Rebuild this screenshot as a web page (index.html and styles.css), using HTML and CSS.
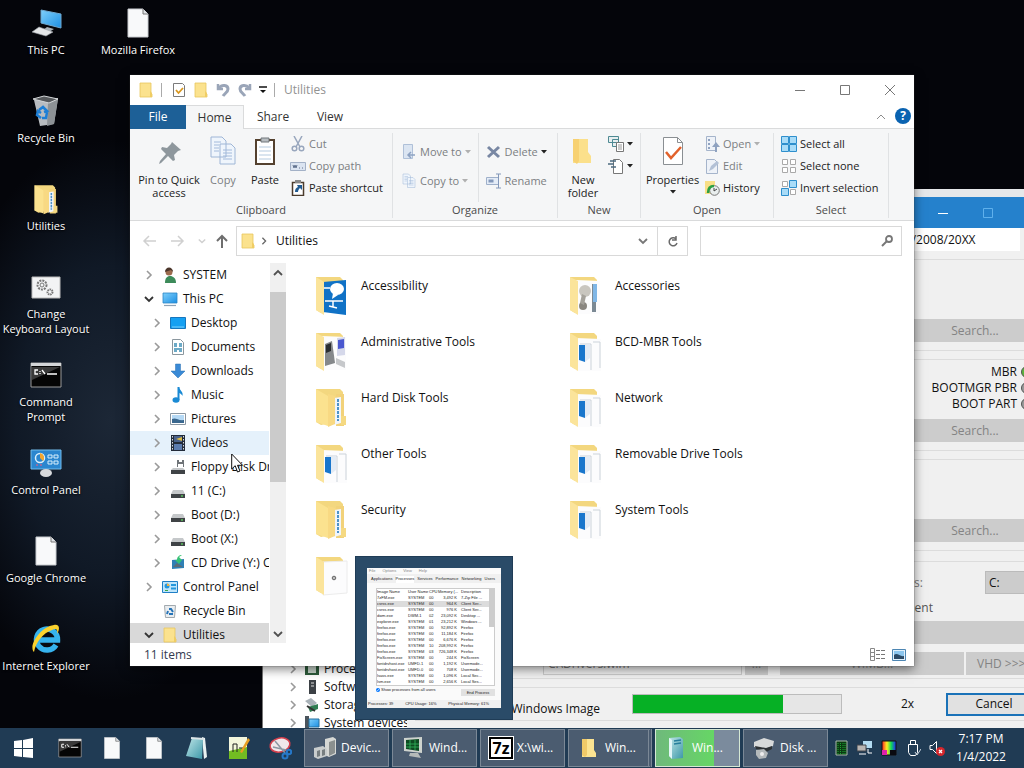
FILE: index.html
```
<!DOCTYPE html>
<html lang="en">
<head>
    <meta charset="UTF-8">
    <meta name="viewport" content="width=device-width, initial-scale=1.0">
    <title>Utilities</title>
    <link rel="stylesheet" href="styles.css">
</head>
<body>

<!-- shared icons -->
<svg class="sprite" width="0" height="0">
    <defs>
        <linearGradient id="gBlue" x1="0" y1="0" x2="1" y2="1"><stop offset="0" stop-color="#7fd0fb"/><stop offset="1" stop-color="#1c8fe3"/></linearGradient>
        <linearGradient id="gTeal" x1="0" y1="0" x2="1" y2="1"><stop offset="0" stop-color="#bfe6e8"/><stop offset="1" stop-color="#3c97a8"/></linearGradient>
        <linearGradient id="gRain"><stop offset="0" stop-color="#f22"/><stop offset=".35" stop-color="#fe2"/><stop offset=".65" stop-color="#1d5"/><stop offset="1" stop-color="#22f"/></linearGradient>
    </defs>
    <symbol id="folder" viewBox="0 0 16 16"><path d="M2 1h11v10l1 1v3H2z" fill="#fbe28e" stroke="#e8c65e" stroke-width=".8"/><path d="M12 9l2 2v4h-2z" fill="#f0cd63"/></symbol>
    <symbol id="page" viewBox="0 0 32 32"><path d="M6 2h15l5 5v23H6z" fill="#f8f9fa" stroke="#c9ccd0"/><path d="M21 2v5h5" fill="#dfe2e5" stroke="#777"/></symbol>
    <symbol id="chev" viewBox="0 0 10 10"><path d="M3 1l4 4-4 4" fill="none" stroke="currentColor" stroke-width="1.6"/></symbol>
    <symbol id="chevd" viewBox="0 0 10 10"><path d="M1 3l4 4 4-4" fill="none" stroke="currentColor" stroke-width="1.8"/></symbol>
    <symbol id="drop" viewBox="0 0 6 4"><path d="M0 0h6L3 3.5z" fill="currentColor"/></symbol>
    <symbol id="pc" viewBox="0 0 16 16"><path d="M1 2h14v10H1z" fill="url(#gBlue)" stroke="#2b86c5" stroke-width=".8"/><path d="M2 14.5h12" stroke="#8fa3b5" stroke-width="1.2"/></symbol>
    <symbol id="drive" viewBox="0 0 16 16"><path d="M3 7h10l2 4H1z" fill="#c5c8ca"/><path d="M1 11h14v4H1z" fill="#3f4346"/><path d="M11 13h2" stroke="#6f6"/></symbol>
    <symbol id="cpanel" viewBox="0 0 16 16"><path d="M.5 2.500h15v11H.5z" fill="#bfe5fb" stroke="#1f7fc6"/><circle cx="5" cy="7" r="2.500" fill="#2497dd"/><path d="M5 7V4.500A2.500 2.500 0 0 1 7.500 7z" fill="#f6b13c"/><path d="M9 5h5v2H9zM9 8.500h5v2H9z" fill="#2497dd"/><path d="M3 11.500h3" stroke="#3aa648"/></symbol>
    <symbol id="cmd" viewBox="0 0 32 32"><path d="M1 4h30v24H1z" fill="#050505" stroke="#9a9a9a"/><path d="M1 4h30v3H1z" fill="#d4d6d8"/><path d="M2 8h28L2 21z" fill="#3a3a3a"/><path d="M8 11H5v4h3M10 12v1M10 14v1M12 11l3 4M17 15h10" stroke="#fff" stroke-width="1.300" fill="none"/></symbol>
    <!-- large open folders -->
    <symbol id="fold-back" viewBox="0 0 36 42"><path d="M3 3h24l3 3v28l-22 5L3 36z" fill="#f3d77f"/></symbol>
    <symbol id="fold-blue" viewBox="0 0 36 42"><use href="#fold-back"/><path d="M9 8l25 1v32H9z" fill="#fcfcfd"/><path d="M13 14h11v26M26 12h7v26" fill="none" stroke="#ccd3da"/><path d="M12 15h6v17l-6-2z" fill="#1976cc"/><path d="M18 15l5-1v14l-5 4z" fill="#e3ebf5"/><path d="M3 3l8 5v33l-8-5z" fill="#fbe49b"/></symbol>
    <symbol id="fold-tools" viewBox="0 0 36 42"><use href="#fold-back"/><path d="M23 8h8v32h-8z" fill="#f2d27a"/><path d="M21 12l7-1v26l-7 2z" fill="#f1f5fa"/><path d="M25 13v22" stroke="#4f93c9" stroke-width="2" stroke-dasharray="3 1"/><path d="M3 3l12 7v30L3 36z" fill="#fbe28f"/><path d="M15 8l7 2v28l-7 3z" fill="#f8d983"/><path d="M28 30h5v9h-5z" fill="#f5d982"/></symbol>
    <symbol id="pages" viewBox="0 0 32 32"><path d="M4 2h11l4 4v16H4zM13 9h11l4 4v16H13z" fill="#eff5fc" stroke="#9fb6d6"/><path d="M7 7h7M7 10h5M7 13h5M7 16h5M16 15h9M16 18h9M16 21h9M16 24h9" stroke="#a3badb"/></symbol>
</svg>

<div class="desktop">

    <nav class="shortcuts">
        <ul class="shortcut-col">
            <li><svg viewBox="0 0 32 32"><path d="M11 3l20 4v14l-20-5z" fill="url(#gBlue)" stroke="#6fa8cf"/><path d="M17 20l7 2-5 3-6-2z" fill="#aab3ba"/><path d="M9 20l14 5-7 4-14-4z" fill="#e4e6e8" stroke="#9aa0a5" stroke-width=".6"/></svg><span>This PC</span></li>
            <li><svg viewBox="0 0 32 32"><path d="M4 5l24-2-4 26-14 2z" fill="#b8bcc0"/><path d="M18 8l10-4-4 25-7 2z" fill="#8d9296"/><path d="M3 4l11-3 14 3-9 4z" fill="#56595c" stroke="#d5d8da"/><path d="M9 15l4-3 4 4-3 1M17 17l-1 6h-4M11 23l-4-3 1-4 3 2" fill="none" stroke="#1d7fd6" stroke-width="2.500"/></svg><span>Recycle Bin</span></li>
            <li><svg viewBox="0 0 36 42"><use href="#fold-tools"/></svg><span>Utilities</span></li>
            <li><svg viewBox="0 0 32 32"><path d="M2 6h28v21H2z" fill="#f2f3f4" stroke="#bbb"/><circle cx="12" cy="14" r="4.500" fill="none" stroke="#777" stroke-width="2" stroke-dasharray="2 1"/><circle cx="12" cy="14" r="2" fill="none" stroke="#777"/><circle cx="20" cy="21" r="2.500" fill="none" stroke="#777" stroke-width="2" stroke-dasharray="1.500 .7"/></svg><span>Change<br>Keyboard Layout</span></li>
            <li><svg><use href="#cmd"/></svg><span>Command<br>Prompt</span></li>
            <li><svg viewBox="0 0 32 32"><path d="M1 3h30v19H1z" fill="#2b86cf" stroke="#73bcec"/><circle cx="10" cy="11" r="4.500" fill="none" stroke="#d9effc" stroke-width="1.500"/><path d="M10 11V6a5 5 0 0 1 3 8z" fill="#f3a62f"/><path d="M18 8h4v3h-4zM24 8h4v3h-4zM18 14h4v3h-4zM24 14h4v3h-4z" fill="none" stroke="#d9effc"/><ellipse cx="16" cy="26" rx="6" ry="4" fill="#d8dadd"/><path d="M6 18h6" stroke="#f57" stroke-dasharray="2 2"/></svg><span>Control Panel</span></li>
            <li><svg><use href="#page"/></svg><span>Google Chrome</span></li>
            <li><svg viewBox="0 0 32 32"><path d="M26 22a10.500 10.500 0 1 1 1.500-5H9" fill="none" stroke="#36b3ee" stroke-width="5.500"/><path d="M4 29C-2 23 10 4 24 2c6-1 6 4 3 9 1-5-1-6-5-4C13 10 6 19 4 29z" fill="#fbd22e"/></svg><span>Internet Explorer</span></li>
        </ul>
        <ul class="shortcut-col">
            <li><svg><use href="#page"/></svg><span>Mozilla Firefox</span></li>
        </ul>
    </nav>

    <!-- device manager -->
    <section class="devices">
        <ul>
            <li><svg class="chev"><use href="#chev"/></svg><svg class="ico" viewBox="0 0 16 16"><path d="M1 3h14v11H1z" fill="#2d5c3b"/><path d="M4 5h8v7H4z" fill="#c9d6cc"/></svg>Processors</li>
            <li><svg class="chev"><use href="#chev"/></svg><svg class="ico" viewBox="0 0 16 16"><path d="M5 1h7v14H5z" fill="#3b4045"/><path d="M7 4h3M7 7h3" stroke="#ddd"/></svg>Software devices</li>
            <li><svg class="chev"><use href="#chev"/></svg><svg class="ico" viewBox="0 0 16 16"><path d="M1 4l6-3 6 5-5 4z" fill="#a9b2b8"/><path d="M4 10l10-3v5l-8 3z" fill="#2f7d52"/><path d="M3 9l8 5" stroke="#333" stroke-width="2"/></svg>Storage controllers</li>
            <li><svg class="chev"><use href="#chev"/></svg><svg class="ico" viewBox="0 0 16 16"><path d="M1 1h4v13H1z" fill="#4b545c"/><path d="M5 4h10v8H5z" fill="url(#gBlue)" stroke="#26709e"/></svg>System devices</li>
        </ul>
    </section>

    <!-- windows setup -->
    <section class="setup">
        <header class="setup-title">
            <button type="button" aria-label="Minimize"><svg viewBox="0 0 10 10"><path d="M0 5.500h10" stroke="#fff"/></svg></button>
            <button type="button" aria-label="Maximize" disabled><svg viewBox="0 0 10 10"><path d="M.5.5h9v9h-9z" fill="none" stroke="#5fb0ec"/></svg></button>
            <button type="button" aria-label="Close"><svg viewBox="0 0 10 10"><path d="M0 0l10 10M10 0L0 10" stroke="#fff"/></svg></button>
        </header>
        <div class="setup-body">
            <select class="setup-os" aria-label="Windows version"><option>Windows Vista/7/8/10/2008/20XX</option></select>
            <div class="box"><button type="button" class="flat search" disabled>Search...</button></div>
            <div class="box">
                <ul class="boot-state">
                    <li>MBR<i class="led green"></i></li>
                    <li>BOOTMGR PBR<i class="led"></i></li>
                    <li>BOOT PART<i class="led"></i></li>
                </ul>
                <button type="button" class="flat search" disabled>Search...</button>
            </div>
            <div class="box"><button type="button" class="flat search" disabled>Search...</button></div>
            <div class="box options">
                <div class="opt-row"><label for="driveLetter">Preassigned drives:</label><select id="driveLetter"><option>C:</option></select></div>
                <div class="opt-note">Unattended deployment</div>
                <button type="button" class="flat wide" aria-label="Options" disabled></button>
                <div class="opt-buttons">
                    <input type="text" value="C:\Drivers.wim" aria-label="Driver file" disabled>
                    <button type="button" class="flat dots" disabled>...</button>
                    <button type="button" class="flat wimb" disabled>WIMB...</button>
                    <button type="button" class="flat vhd" disabled>VHD &gt;&gt;&gt;</button>
                </div>
            </div>
            <div class="box status">
                <span class="status-text">Applying Windows Image</span>
                <div class="progress"><div class="progress-fill" style="width: 72%"></div></div>
                <span class="speed">2x</span>
                <button type="button" class="cancel">Cancel</button>
            </div>
        </div>
    </section>

    <!-- file explorer -->
    <main class="explorer">
        <header class="titlebar">
            <svg class="ico"><use href="#folder"/></svg>
            <i class="bar"></i>
            <svg class="ico" viewBox="0 0 16 16"><path d="M2.500 1.500h9l2 2v11h-11z" fill="#fff" stroke="#7b7b7b"/><path d="M5 8l2.500 3L12 6" fill="none" stroke="#d9971e" stroke-width="1.800"/></svg>
            <svg class="ico"><use href="#folder"/></svg>
            <svg class="ico" viewBox="0 0 16 16"><path d="M3 2v5h5" fill="none" stroke="#9aa5b8" stroke-width="2.500"/><path d="M4 6c3-4 9-3 9 1 0 3-3 4-5 7" fill="none" stroke="#9aa5b8" stroke-width="3"/></svg>
            <svg class="ico" viewBox="0 0 16 16"><path d="M13 2v5H8" fill="none" stroke="#9aa5b8" stroke-width="2.500"/><path d="M12 6C9 2 3 3 3 7c0 3 3 4 5 7" fill="none" stroke="#9aa5b8" stroke-width="3"/></svg>
            <svg class="menu-arrow" viewBox="0 0 8 8"><path d="M0 1h8" stroke="#111" stroke-width="1.500"/><path d="M1 4h6L4 7z" fill="#111"/></svg>
            <i class="bar"></i>
            <span class="title">Utilities</span>
            <div class="win-buttons">
                <button type="button" aria-label="Minimize"><svg viewBox="0 0 10 10"><path d="M0 5.500h10" stroke="#777"/></svg></button>
                <button type="button" aria-label="Maximize"><svg viewBox="0 0 10 10"><path d="M.5.5h9v9h-9z" fill="none" stroke="#777"/></svg></button>
                <button type="button" aria-label="Close"><svg viewBox="0 0 10 10"><path d="M0 0l10 10M10 0L0 10" stroke="#777"/></svg></button>
            </div>
        </header>

        <div class="tabs">
            <button type="button" class="tab file">File</button>
            <button type="button" class="tab active">Home</button>
            <button type="button" class="tab">Share</button>
            <button type="button" class="tab">View</button>
            <svg class="collapse" viewBox="0 0 10 10"><path d="M1 7l4-4 4 4" fill="none" stroke="#8c8c8c"/></svg>
            <button type="button" class="help" aria-label="Help">?</button>
        </div>

        <div class="ribbon">
            <div class="group clipboard">
                <div class="tools">
                    <button type="button" class="big pin"><svg viewBox="0 0 32 32"><path d="M19 7l9 8-3 1-4 4 1 5-2 1-5-5-7 7-2 1 1-3 6-7-5-5 1-2 5 1 4-4z" fill="#8e979d"/></svg>Pin to Quick<br>access</button>
                    <button type="button" class="big copy" disabled><svg><use href="#pages"/></svg>Copy</button>
                    <button type="button" class="big paste"><svg viewBox="0 0 32 32"><path d="M7 5h18v24H7z" fill="#fff" stroke="#54412f" stroke-width="2"/><path d="M12 3h8v4h-8z" fill="#b9bec2" stroke="#70767b"/><path d="M10 12h12M10 16h12M10 20h12M10 24h12" stroke="#b5cbe0"/></svg>Paste</button>
                    <div class="stack">
                        <button type="button" class="small" disabled><svg viewBox="0 0 16 16"><path d="M4 0l6 11M12 0L6 11" stroke="#98a6bd" stroke-width="1.500"/><circle cx="4.500" cy="12.500" r="2.300" fill="none" stroke="#98a6bd" stroke-width="1.500"/><circle cx="11.500" cy="12.500" r="2.300" fill="none" stroke="#98a6bd" stroke-width="1.500"/></svg>Cut</button>
                        <button type="button" class="small" disabled><svg viewBox="0 0 16 16"><path d="M.5 4.500h15v8H.5z" fill="#dbe4f1" stroke="#a3b1c7"/><path d="M3 7l1 3 1-3 1 3 1-3M9 10h1M12 10h1" fill="none" stroke="#62738f"/></svg>Copy path</button>
                        <button type="button" class="small"><svg viewBox="0 0 16 16"><path d="M2.500 2.500h11v13h-11z" fill="#fff" stroke="#4b3b2c" stroke-width="1.500"/><path d="M5 0h6v3H5z" fill="#888"/><path d="M5 12c0-3 1-4 3-5L7 5h5v5l-2-2c-1 1-2 2-2 4z" fill="#215a91"/></svg>Paste shortcut</button>
                    </div>
                </div>
                <span class="caption">Clipboard</span>
            </div>
            <div class="group organize">
                <div class="tools">
                    <div class="stack two">
                        <button type="button" class="small" disabled><svg viewBox="0 0 16 16"><path d="M2.500.5h9v14h-9z" fill="#dbe5f2" stroke="#afc0d8"/><path d="M14 11H8M10 8l-3 3 3 3" stroke="#8da2c2" fill="none" stroke-width="1.500"/></svg>Move to<svg class="drop"><use href="#drop"/></svg></button>
                        <button type="button" class="small" disabled><svg><use href="#pages"/></svg>Copy to<svg class="drop"><use href="#drop"/></svg></button>
                    </div>
                    <div class="stack two second">
                        <button type="button" class="small" disabled><svg viewBox="0 0 16 16"><path d="M2 3l11 10M13 3L2 13" stroke="#7887a3" stroke-width="3"/></svg>Delete<svg class="drop dark"><use href="#drop"/></svg></button>
                        <button type="button" class="small" disabled><svg viewBox="0 0 16 16"><path d="M.5 4.500h12v7H.5z" fill="#e4ecf7" stroke="#9fb0ca"/><path d="M2.500 8h5" stroke="#8398ba" stroke-width="3"/><path d="M10 1h5M12.500 1v14M10 15h5" stroke="#8398ba"/></svg>Rename</button>
                    </div>
                </div>
                <span class="caption">Organize</span>
            </div>
            <div class="group new">
                <div class="tools">
                    <button type="button" class="big folder"><svg viewBox="0 0 32 32"><path d="M6 4h15v13l3 4v7H6z" fill="#fbe08b"/><path d="M6 4h6v22l-2 3-4-3z" fill="#f7d172"/></svg>New<br>folder</button>
                    <div class="stack">
                        <button type="button" class="small" aria-label="New item"><svg viewBox="0 0 16 16"><path d="M.5.5h10v6H.5zM4.500 3.500h6v7h-6z" fill="#e7eef0" stroke="#4e8a93"/><path d="M8.500 6.500h7v9h-7z" fill="#fff" stroke="#777"/><path d="M10 9h4M10 11h4M10 13h4" stroke="#999"/></svg><svg class="drop dark"><use href="#drop"/></svg></button>
                        <button type="button" class="small" aria-label="Easy access"><svg viewBox="0 0 16 16"><path d="M5.500 1.500h6l3 3v11h-9z" fill="#fff" stroke="#777"/><path d="M2 3h6M0 6h6M3 9h5" stroke="#4c6b80" stroke-width="1.500"/></svg><svg class="drop dark"><use href="#drop"/></svg></button>
                    </div>
                </div>
                <span class="caption">New</span>
            </div>
            <div class="group open">
                <div class="tools">
                    <button type="button" class="big props"><svg viewBox="0 0 32 32"><path d="M6.500 2.500h14l5 5v22h-19z" fill="#fff" stroke="#8a8f93"/><path d="M20.500 2.500v5h5" fill="none" stroke="#8a8f93"/><path d="M9 17l5 6 10-11" fill="none" stroke="#e2622c" stroke-width="2.500"/></svg>Properties<svg class="drop dark"><use href="#drop"/></svg></button>
                    <div class="stack">
                        <button type="button" class="small" disabled><svg viewBox="0 0 16 16"><path d="M2.500.5h9v14h-9z" fill="#eef2f8" stroke="#a5b4cb"/><path d="M4 3h2v2H4zM4 7h2v2H4zM4 11h2v2H4z" fill="#8fa2c0"/><path d="M11 16v-5H8l4-5 4 5h-3v5z" fill="#8fa2c0"/></svg>Open<svg class="drop"><use href="#drop"/></svg></button>
                        <button type="button" class="small" disabled><svg viewBox="0 0 16 16"><path d="M2.500 1.500h8l3 3v11h-11z" fill="#eef2f8" stroke="#a5b4cb"/><path d="M5 13l2-5 6-5 2 2-6 6z" fill="#b3c1d6"/></svg>Edit</button>
                        <button type="button" class="small"><svg viewBox="0 0 16 16"><path d="M1 1h10v13H1z" fill="#f8df86"/><circle cx="10.500" cy="10.500" r="4.800" fill="#e9eeee" stroke="#777"/><path d="M10 8v3l3-2" stroke="#444" fill="none"/><path d="M4 13c0-5 2-7 6-7" fill="none" stroke="#2ca043" stroke-width="2.500"/></svg>History</button>
                    </div>
                </div>
                <span class="caption">Open</span>
            </div>
            <div class="group select">
                <div class="tools">
                    <div class="stack">
                        <button type="button" class="small"><svg viewBox="0 0 16 16"><path d="M.5.5h7v7h-7zM8.500.5h7v7h-7zM.5 8.500h7v7h-7zM8.500 8.500h7v7h-7z" fill="#a9dcf8" stroke="#2e8fcd"/></svg>Select all</button>
                        <button type="button" class="small"><svg viewBox="0 0 16 16"><path d="M1.500 1.500h5v5h-5zM9.500 1.500h5v5h-5zM1.500 9.500h5v5h-5zM9.500 9.500h5v5h-5z" fill="#fff" stroke="#a9a9a9"/></svg>Select none</button>
                        <button type="button" class="small"><svg viewBox="0 0 16 16"><path d="M1.500 1.500h5v5h-5zM9.500 9.500h5v5h-5z" fill="#fff" stroke="#a9a9a9"/><path d="M8.500.5h7v7h-7zM.5 8.500h7v7h-7z" fill="#a9dcf8" stroke="#2e8fcd"/></svg>Invert selection</button>
                    </div>
                </div>
                <span class="caption">Select</span>
            </div>
        </div>

        <div class="address-row">
            <svg class="arrow" viewBox="0 0 14 14"><path d="M14 7H2M7 2L2 7l5 5" fill="none" stroke="#d0d0d0" stroke-width="1.500"/></svg>
            <svg class="arrow" viewBox="0 0 14 14"><path d="M0 7h12M7 2l5 5-5 5" fill="none" stroke="#d0d0d0" stroke-width="1.500"/></svg>
            <svg class="recent"><use href="#chevd"/></svg>
            <svg class="arrow up" viewBox="0 0 14 14"><path d="M7 14V2M2 7l5-5 5 5" fill="none" stroke="#6e6e6e" stroke-width="2"/></svg>
            <div class="address">
                <svg class="ico"><use href="#folder"/></svg>
                <svg class="chev"><use href="#chev"/></svg>
                <span>Utilities</span>
                <svg class="chevd"><use href="#chevd"/></svg>
                <button type="button" class="refresh" aria-label="Refresh"><svg viewBox="0 0 12 12"><path d="M9 3a4 4 0 1 0 1 4M9 0v4H5" fill="none" stroke="#6a6a6a" stroke-width="1.500"/></svg></button>
            </div>
            <div class="search-box">
                <input type="text" aria-label="Search Utilities">
                <svg viewBox="0 0 12 12"><circle cx="8" cy="4" r="3" fill="none" stroke="#777" stroke-width="1.800"/><path d="M6 6l-5 5" stroke="#777" stroke-width="2"/></svg>
            </div>
        </div>

        <div class="content">
            <div class="tree-pane">
                <ul class="tree">
                    <li><svg class="chev"><use href="#chev"/></svg><svg class="ico" viewBox="0 0 16 16"><path d="M3 16c0-5 2-7 5-7s6 2 6 7z" fill="#3d8b5a"/><circle cx="7" cy="5" r="3.500" fill="#9c6b4e"/><path d="M3 5c0-6 8-6 8 0L9 3z" fill="#4b352a"/></svg>SYSTEM</li>
                    <li><svg class="chev dark"><use href="#chevd"/></svg><svg class="ico"><use href="#pc"/></svg>This PC</li>
                    <li class="sub"><svg class="chev"><use href="#chev"/></svg><svg class="ico" viewBox="0 0 16 16"><path d="M.5 2.500h15v11H.5z" fill="#15a0f2" stroke="#1776bd"/><path d="M2 12h12" stroke="#7fd0fb"/></svg>Desktop</li>
                    <li class="sub"><svg class="chev"><use href="#chev"/></svg><svg class="ico" viewBox="0 0 16 16"><path d="M2.500.5h8l3 3v12h-11z" fill="#fff" stroke="#8b979e"/><path d="M4 5h3M4 7h3M9 5h3M9 7h3M4 10h8M4 12h3M9 12h3" stroke="#3d8fb5" stroke-width="1.300"/></svg>Documents</li>
                    <li class="sub"><svg class="chev"><use href="#chev"/></svg><svg class="ico" viewBox="0 0 16 16"><path d="M5.500 1h5v7H15l-7 7-7-7h4.500z" fill="#3a8ad6" stroke="#2b70b3" stroke-width=".5"/></svg>Downloads</li>
                    <li class="sub"><svg class="chev"><use href="#chev"/></svg><svg class="ico" viewBox="0 0 16 16"><ellipse cx="6" cy="13" rx="3.500" ry="2.700" fill="#1a8ad4"/><path d="M7.500 0h2c0 4 4 4 3 9-1-2-2-2-3-3v7h-2z" fill="#1a8ad4"/></svg>Music</li>
                    <li class="sub"><svg class="chev"><use href="#chev"/></svg><svg class="ico" viewBox="0 0 16 16"><path d="M.5 2.500h15v11H.5z" fill="#fff" stroke="#8a97a2"/><path d="M2 4h12v8H2z" fill="#b5d9f5"/><path d="M2 8c4-2 6 2 12 1v3H2z" fill="#39678e"/></svg>Pictures</li>
                    <li class="sub hover"><svg class="chev"><use href="#chev"/></svg><svg class="ico" viewBox="0 0 16 16"><path d="M1 0h14v16H1z" fill="#222b3a"/><path d="M2.500 1v14M13.500 1v14" stroke="#d8dde2" stroke-dasharray="1.500 1.500"/><path d="M4 1h8v6H4z" fill="#49618b"/><path d="M4 9h8v6H4z" fill="#5b7cb0"/><path d="M6 4l6-2v4z" fill="#d9b944"/></svg>Videos</li>
                    <li class="sub"><svg class="chev"><use href="#chev"/></svg><svg class="ico" viewBox="0 0 16 16"><path d="M3 9h10l2 2H1z" fill="#c5c8ca"/><path d="M1 11h14v4H1z" fill="#3f4346"/><path d="M7 1h7v7H7z" fill="#6f7478"/><path d="M9 1h3v2H9zM8 5h5v3H8z" fill="#fff"/></svg>Floppy Disk Drive (A:)</li>
                    <li class="sub"><svg class="chev"><use href="#chev"/></svg><svg class="ico"><use href="#drive"/></svg>11 (C:)</li>
                    <li class="sub"><svg class="chev"><use href="#chev"/></svg><svg class="ico"><use href="#drive"/></svg>Boot (D:)</li>
                    <li class="sub"><svg class="chev"><use href="#chev"/></svg><svg class="ico"><use href="#drive"/></svg>Boot (X:)</li>
                    <li class="sub"><svg class="chev"><use href="#chev"/></svg><svg class="ico" viewBox="0 0 16 16"><path d="M2 5l12-1v9L2 14z" fill="#2f80b5"/><path d="M3 12l4-4 6 4" fill="#5b6d77"/><path d="M9 2l3 3-3 4-4-4h2c0-3 2-5 5-5z" fill="#37c275"/></svg>CD Drive (Y:) CD_ROM</li>
                    <li><svg class="chev"><use href="#chev"/></svg><svg class="ico"><use href="#cpanel"/></svg>Control Panel</li>
                    <li><i class="chev"></i><svg class="ico" viewBox="0 0 16 16"><path d="M2.500 2.500h11l-1 12h-9z" fill="#e9edf0" stroke="#a2a9ae"/><path d="M5 11l1-3M7 6h2l2 3M11 11H7" fill="none" stroke="#2674b8" stroke-width="2"/></svg>Recycle Bin</li>
                    <li class="selected"><svg class="chev dark"><use href="#chevd"/></svg><svg class="ico"><use href="#folder"/></svg>Utilities</li>
                </ul>
                <div class="scrollbar">
                    <svg viewBox="0 0 10 10"><path d="M1 7l4-4 4 4" fill="none" stroke="#505050" stroke-width="1.800"/></svg>
                    <div class="thumb"></div>
                    <svg><use href="#chevd"/></svg>
                </div>
            </div>
            <ul class="files">
                <li><svg viewBox="0 0 36 42"><use href="#fold-back"/><path d="M10 8l23-2v35l-23-3z" fill="#1072c6"/><ellipse cx="24" cy="15" rx="7" ry="6" fill="#fff"/><path d="M20 19l-1 6 6-4z" fill="#fff"/><path d="M11 14h6M12 27h18M20 27v6M16 32l8 2" stroke="#fff" fill="none" stroke-width="1.500"/><path d="M3 3l8 5v33l-8-5z" fill="#fbe49b"/></svg>Accessibility</li>
                <li><svg viewBox="0 0 36 42"><use href="#fold-back"/><path d="M9 6l24 1v33H9z" fill="#fcfcfd"/><circle cx="18" cy="17" r="6" fill="#c9c6bf"/><circle cx="16" cy="32" r="4" fill="#8a8780"/><path d="M15 20l4 2-2 9-4-2z" fill="#a5a29b"/><path d="M25 10h4v28h-4z" fill="#7b8994"/><path d="M26 10h4v18h-4z" fill="#7fb6e6"/><path d="M3 3l8 4v34l-8-5z" fill="#fbe49b"/></svg>Accessories</li>
                <li><svg viewBox="0 0 36 42"><use href="#fold-back"/><path d="M9 6l24 1v33H9z" fill="#fcfcfd"/><path d="M12 14l7-3 3 22-10 3z" fill="#85888b"/><path d="M13 15l5-2v8l-5 2z" fill="#2b2e31"/><path d="M24 8l8-1v18l-8 1z" fill="#d5d8ea"/><path d="M25 10l6-1v9l-6 1z" fill="#4a58cf"/><path d="M23 28l9 4v6l-9-4z" fill="#c6c8cb"/><path d="M3 3l8 4v34l-8-5z" fill="#fbe49b"/></svg>Administrative Tools</li>
                <li><svg><use href="#fold-blue"/></svg>BCD-MBR Tools</li>
                <li><svg><use href="#fold-tools"/></svg>Hard Disk Tools</li>
                <li><svg><use href="#fold-blue"/></svg>Network</li>
                <li><svg><use href="#fold-blue"/></svg>Other Tools</li>
                <li><svg><use href="#fold-blue"/></svg>Removable Drive Tools</li>
                <li><svg><use href="#fold-tools"/></svg>Security</li>
                <li><svg><use href="#fold-blue"/></svg>System Tools</li>
                <li><svg viewBox="0 0 36 42"><use href="#fold-back"/><path d="M10 8l24-1v32l-24 2z" fill="#fcfcfd" stroke="#ececec"/><circle cx="21" cy="24" r="1.800" fill="#bbb" stroke="#666"/><path d="M3 3l8 5v33l-8-5z" fill="#fbe49b"/></svg></li>
            </ul>
        </div>

        <footer class="statusbar">
            <span>11 items</span>
            <svg class="view-details" viewBox="0 0 16 14"><path d="M.5.5h4v12h-4zM.5 4.500h4M.5 8.500h4" fill="none" stroke="#888"/><path d="M6 2.500h10M6 6.500h10M6 10.500h10" stroke="#777" stroke-dasharray="4 1"/></svg>
            <svg class="view-large" viewBox="0 0 14 12"><path d="M.5.5h13v11H.5z" fill="#e2f1fc" stroke="#4d86b3"/><path d="M2 2h10v8H2z" fill="#8cc6ee"/><path d="M2 6c3-3 6 2 10 1v3H2z" fill="#2c4a66"/></svg>
        </footer>
    </main>

    <!-- taskbar preview -->
    <aside class="preview">
        <div class="taskmgr">
            <div class="tm-menu"><span>File</span><span>Options</span><span>View</span><span>Help</span></div>
            <div class="tm-tabs"><span>Applications</span><span class="on">Processes</span><span>Services</span><span>Performance</span><span>Networking</span><span>Users</span></div>
            <div class="tm-page">
                <div class="tm-list">
                    <table>
                        <tr><th class="c-name">Image Name</th><th class="c-user">User Name</th><th class="c-cpu">CPU</th><th class="c-mem">Memory (...</th><th>Description</th></tr>
                        <tr><td>7zFM.exe</td><td>SYSTEM</td><td>00</td><td>3,492 K</td><td>7-Zip File ...</td></tr>
                        <tr class="on"><td>csrss.exe</td><td>SYSTEM</td><td>00</td><td>964 K</td><td>Client Ser...</td></tr>
                        <tr><td>csrss.exe</td><td>SYSTEM</td><td>00</td><td>976 K</td><td>Client Ser...</td></tr>
                        <tr><td>dwm.exe</td><td>DWM-1</td><td>02</td><td>23,092 K</td><td>Desktop ...</td></tr>
                        <tr><td>explorer.exe</td><td>SYSTEM</td><td>01</td><td>23,212 K</td><td>Windows ...</td></tr>
                        <tr><td>firefox.exe</td><td>SYSTEM</td><td>00</td><td>92,892 K</td><td>Firefox</td></tr>
                        <tr><td>firefox.exe</td><td>SYSTEM</td><td>00</td><td>11,184 K</td><td>Firefox</td></tr>
                        <tr><td>firefox.exe</td><td>SYSTEM</td><td>00</td><td>6,676 K</td><td>Firefox</td></tr>
                        <tr><td>firefox.exe</td><td>SYSTEM</td><td>10</td><td>208,992 K</td><td>Firefox</td></tr>
                        <tr><td>firefox.exe</td><td>SYSTEM</td><td>03</td><td>726,348 K</td><td>Firefox</td></tr>
                        <tr><td>FixScreen.exe</td><td>SYSTEM</td><td>00</td><td>244 K</td><td>FixScreen</td></tr>
                        <tr><td>fontdrvhost.exe</td><td>UMFD-1</td><td>00</td><td>1,192 K</td><td>Usermode...</td></tr>
                        <tr><td>fontdrvhost.exe</td><td>UMFD-0</td><td>00</td><td>708 K</td><td>Usermode...</td></tr>
                        <tr><td>lsass.exe</td><td>SYSTEM</td><td>00</td><td>1,096 K</td><td>Local Sec...</td></tr>
                        <tr><td>lsm.exe</td><td>SYSTEM</td><td>00</td><td>2,656 K</td><td>Local Ses...</td></tr>
                    </table>
                    <div class="tm-scroll"></div>
                </div>
                <div class="tm-actions"><label><input type="checkbox" checked>Show processes from all users</label><button type="button">End Process</button></div>
            </div>
            <div class="tm-status"><span>Processes: 39</span><span>CPU Usage: 16%</span><span>Physical Memory: 61%</span></div>
        </div>
    </aside>

    <svg class="pointer" viewBox="0 0 12 20"><path d="M.7 1v15l3.500-3.300L6.500 19l2.500-1-2.500-5.700h5z" fill="#fff" stroke="#111"/></svg>
</div>

<footer class="taskbar">
    <div class="launchers">
        <button type="button" class="start" aria-label="Start"><svg viewBox="0 0 24 24"><path d="M2 5l8-1v8H2zM11 4l10-2v10H11zM2 13h8v8l-8-1zM11 13h10v9l-10-1z" fill="#fff"/></svg></button>
        <button type="button" aria-label="Command Prompt"><svg><use href="#cmd"/></svg></button>
        <button type="button" aria-label="Mozilla Firefox"><svg><use href="#page"/></svg></button>
        <button type="button" aria-label="Google Chrome"><svg><use href="#page"/></svg></button>
        <button type="button" aria-label="Notepad"><svg viewBox="0 0 24 24"><path d="M18 1l3 1 2 19-3 2z" fill="#e9f2f2"/><path d="M8 2l11 1-1 20-16-3z" fill="url(#gTeal)"/><path d="M7 2l13 1" stroke="#dce4e6" stroke-width="2"/></svg></button>
        <button type="button" aria-label="Notepad++"><svg viewBox="0 0 24 24"><path d="M3 1h18v22H3z" fill="#f3f6dc"/><path d="M3 15l18-4v12H3z" fill="#72bc22"/><path d="M7 16V8h4v8M13 12h6" stroke="#222" fill="none"/><path d="M14 16L22 2l2 2-8 13z" fill="#e8a020"/></svg></button>
        <button type="button" aria-label="Snipping Tool"><svg viewBox="0 0 24 24"><ellipse cx="12" cy="9" rx="10" ry="7" fill="#f1e7ea" stroke="#d5404d" stroke-width="1.500" transform="rotate(-12 12 9)"/><path d="M7 5l10 12M5 11l13 3" stroke="#8b97a2" stroke-width="1.500"/><circle cx="17" cy="20" r="2.500" fill="none" stroke="#2678c9" stroke-width="2"/><circle cx="21" cy="16" r="2.200" fill="none" stroke="#2678c9" stroke-width="2"/></svg></button>
    </div>
    <div class="tasks">
        <button type="button" class="task"><svg viewBox="0 0 24 24"><path d="M12 3l8-2 3 2v15l-7 3-4-2z" fill="#d6d8d5"/><path d="M16 6l6-2v13l-6 3z" fill="#8b908f"/><path d="M1 12l9-2 4 3v7l-9 3-4-2z" fill="#c9cdcd"/><path d="M4 15l3-1v6l-3 1zM9 14l3-1v6l-3 1z" fill="#777e80"/></svg>Devic...</button>
        <button type="button" class="task"><svg viewBox="0 0 24 24"><path d="M3 2l18-1v16L3 15z" fill="#ced3ce"/><path d="M5 4l13-1v12L5 13z" fill="#0d4a22"/><path d="M5 8h13M5 11h13M9 4v9M14 4v10" stroke="#33b65d" stroke-width=".8"/><path d="M9 17h8l3 5-12-2z" fill="#b5bab8"/></svg>Wind...</button>
        <button type="button" class="task"><b class="seven">7z</b>X:\wi...</button>
        <button type="button" class="task stacked"><svg viewBox="0 0 24 24"><path d="M5 3h12v11l2 3v4H5z" fill="#fbe391"/><path d="M5 3h5v16l-2 2-3-2z" fill="#efc968"/></svg>Win...</button>
        <button type="button" class="task copying"><svg viewBox="0 0 24 24"><path d="M5 2l11-1 3 2v19l-11 1-3-3z" fill="url(#gTeal)"/><path d="M5 2l3 2v19l-3-3z" fill="#e2f5f7"/><path d="M10 5l7-1M10 8l7-1" stroke="#267e9c" stroke-width="1.500"/></svg>Win...</button>
        <button type="button" class="task"><svg viewBox="0 0 24 24"><path d="M2 6l10-4 10 3-1 5-7 3-12-2z" fill="#d8dada"/><path d="M3 10l11 2 6-2v3l-6 3-10-3z" fill="#2e3336"/><path d="M4 14l8-1 4 4-2 5-7 1-3-4z" fill="#b4b9bb"/><circle cx="10" cy="18" r="2" fill="#eee"/></svg>Disk ...</button>
    </div>
    <div class="tray">
        <svg viewBox="0 0 16 16"><path d="M3 1h11v14H3z" fill="#0b3a12" stroke="#a9bba9"/><path d="M5 3v11M7.500 3v11M10 3v11M12 3v11" stroke="#1fa535" stroke-dasharray="1 1"/></svg>
        <svg viewBox="0 0 16 16"><path d="M6 1h9v7H6z" fill="#b3dbf1"/><path d="M0 5h9v6H0z" fill="#b9b5b3" stroke="#42474c"/><path d="M2 14h7M11 9v4h4" stroke="#fff" fill="none"/></svg>
        <svg viewBox="0 0 16 16"><path d="M1 1h14v14H1z" fill="url(#gRain)" stroke="#111"/><path d="M1 10h5v5H1z" fill="#d2a"/><path d="M9 10h6v5H9z" fill="#0a0a10"/></svg>
        <svg viewBox="0 0 16 16"><path d="M5.500.5h5v4h-5zM3.500 4.500h9v8l-2 3h-5l-2-3z" fill="none" stroke="#fff"/><path d="M10 12l2 3 4-6" fill="none" stroke="#ccd6df"/></svg>
        <svg viewBox="0 0 16 16"><path d="M1 5.500h2.500l4-4v12l-4-4H1z" fill="none" stroke="#fff"/><circle cx="11.500" cy="11.500" r="4.500" fill="#d5262c"/><path d="M10 10l3 3M13 10l-3 3" stroke="#fff" stroke-width="1.300"/></svg>
        <div class="clock">7:17 PM<br>1/4/2022</div>
    </div>
</footer>

</body>
</html>
```

FILE: styles.css
```
* {
    box-sizing: border-box;
}
body {
    margin: 0;
    height: 100vh;
    overflow: hidden;
    display: flex;
    flex-direction: column;
    font-family: "Open Sans", "Noto Sans", sans-serif;
    font-size: 12px;
    line-height: 16px;
    color: #111;
}
ul {
    list-style: none;
    margin: 0;
    padding: 0;
}
button,
input,
select {
    font: inherit;
    color: inherit;
    padding: 0;
    margin: 0;
    border: 0;
    border-radius: 0;
    background: none;
}
select {
    appearance: none;
}
svg {
    flex: none;
}
.sprite {
    position: absolute;
}

/* desktop */
.desktop {
    flex: 1;
    position: relative;
    overflow: hidden;
    background: radial-gradient(ellipse 170px 280px at 110px 420px, #1c2736, #101926 55%, transparent), #04050a;
}
.shortcuts {
    display: flex;
    color: #fff;
    text-align: center;
    text-shadow: 0 1px 2px #000;
}
.shortcut-col {
    width: 92px;
}
.shortcut-col li {
    height: 88px;
    padding-top: 7px;
    display: flex;
    flex-direction: column;
    align-items: center;
    font-size: 11px;
    line-height: 15px;
    white-space: nowrap;
}
.shortcut-col svg {
    width: 32px;
    height: 32px;
    margin-bottom: 3px;
}

/* device manager */
.devices {
    position: absolute;
    left: 262px;
    top: 400px;
    bottom: 0;
    width: 150px;
    background: #fff;
    border-left: 1px solid #777;
    display: flex;
    flex-direction: column;
    justify-content: flex-end;
}
.devices ul {
    margin-bottom: -4px;
    padding-left: 25px;
}
.devices li {
    height: 18px;
    display: flex;
    align-items: center;
    white-space: nowrap;
}
.chev {
    width: 10px;
    height: 10px;
    color: #9a9a9a;
}
.chev.dark {
    color: #333;
}
.ico {
    width: 16px;
    height: 16px;
}
.devices .ico {
    margin: 0 4px 0 6px;
}

/* windows setup */
.setup {
    position: absolute;
    left: 407px;
    right: -31px;
    top: 189px;
    bottom: 0;
    background: #f0f0f0;
    border-top: 8px solid #e6e8ea;
}
.setup-title {
    height: 31px;
    background: #2581cc;
    display: flex;
    justify-content: flex-end;
}
.setup-title button,
.win-buttons button {
    width: 45px;
    display: flex;
    align-items: center;
    justify-content: center;
}
.setup-title svg,
.win-buttons svg {
    width: 10px;
    height: 10px;
}
.setup-body {
    padding: 0 13px 0 8px;
    display: flex;
    flex-direction: column;
}
.setup-os {
    align-self: flex-end;
    width: 250px;
    height: 23px;
    margin-right: 22px;
    padding-left: 20px;
    background: #fff;
}
.box {
    height: 92px;
    margin-top: 8px;
    padding-bottom: 8px;
    border: 1px solid #dcdcdc;
    border-right: 0;
    display: flex;
    flex-direction: column;
    justify-content: space-between;
    align-items: flex-end;
}
.flat {
    height: 23px;
    background: #ccc;
    color: #838383;
}
.search {
    width: 134px;
    margin-top: auto;
}
.boot-state {
    padding-top: 4px;
    text-align: right;
}
.boot-state li {
    height: 16px;
    display: flex;
    align-items: center;
    justify-content: flex-end;
}
.led {
    width: 12px;
    height: 12px;
    margin: 0 9px 0 4px;
    border-radius: 50%;
    background: #999;
    border: 1px solid #555;
}
.led.green {
    background: #5ab43c;
}
.options {
    height: 118px;
    margin-top: 10px;
    padding: 9px 0 2px;
    justify-content: flex-start;
}
.opt-row {
    width: 100%;
    display: flex;
    justify-content: flex-end;
    align-items: center;
    color: #777;
}
.opt-row select {
    width: 57px;
    height: 23px;
    margin-left: 62px;
    padding-left: 3px;
    background: #ccc;
    border: 1px solid #bbb;
    color: #111;
}
.opt-note {
    margin: 6px 109px 5px 0;
    color: #555;
}
.wide {
    width: 100%;
}
.opt-buttons {
    display: flex;
    margin-top: 8px;
}
.opt-buttons input {
    width: 199px;
    padding-left: 4px;
    border: 1px solid #ccc;
    color: #777;
}
.dots {
    width: 23px;
    margin: 0 12px 0 3px;
}
.wimb {
    width: 184px;
    margin-right: 2px;
}
.vhd {
    width: 76px;
    padding-left: 11px;
    text-align: left;
}
.status {
    height: 34px;
    padding: 0;
    flex-direction: row;
    justify-content: flex-end;
    align-items: center;
}
.status-text {
    padding-top: 10px;
}
.progress {
    width: 210px;
    height: 20px;
    margin: 0 59px 0 32px;
    background: #e6e6e6;
    border: 1px solid #bcbcbc;
}
.progress-fill {
    height: 100%;
    background: #06b025;
}
.speed {
    width: 45px;
}
.cancel {
    width: 96px;
    height: 23px;
    background: #e1e1e1;
    border: 2px solid #1a72b8;
}

/* explorer window */
.explorer {
    position: absolute;
    left: 130px;
    top: 75px;
    width: 784px;
    height: 591px;
    background: #fff;
    box-shadow: 0 0 1px #444, 0 3px 10px rgba(0, 0, 0, 0.5);
    display: flex;
    flex-direction: column;
}
.titlebar {
    height: 30px;
    padding-left: 8px;
    display: flex;
    align-items: center;
    gap: 6px;
}
.bar {
    width: 1px;
    height: 14px;
    margin: 0 3px 0 1px;
    background: #aaa;
}
.menu-arrow {
    width: 8px;
    height: 8px;
}
.title {
    color: #929292;
}
.win-buttons {
    margin: 0 2px 0 auto;
    height: 30px;
    display: flex;
}
.tabs {
    height: 24px;
    display: flex;
    color: #333;
    box-shadow: inset 0 -1px #dadbdc;
}
.tab {
    width: 58px;
}
.tab.file {
    width: 56px;
    background: #1d6097;
    color: #fff;
}
.tab.active {
    background: #f5f6f7;
    border: 1px solid #dadbdc;
    border-width: 1px 1px 0 0;
}
.tab:nth-child(4) {
    width: 56px;
}
.collapse {
    width: 10px;
    height: 10px;
    margin: 7px 9px 0 auto;
}
.help {
    width: 16px;
    height: 16px;
    margin: 3px 3px 0 0;
    border-radius: 50%;
    background: #0a63b1;
    color: #fff;
    font-weight: bold;
    line-height: 16px;
}
.ribbon {
    height: 92px;
    padding-top: 4px;
    background: #f5f6f7;
    border-bottom: 1px solid #d9dadb;
    display: flex;
    font-size: 11px;
    color: #222;
}
.group {
    height: 85px;
    border-right: 1px solid #e0e2e4;
    display: flex;
    flex-direction: column;
}
.tools {
    height: 70px;
    display: flex;
}
.caption {
    text-align: center;
    color: #4a4a4a;
}
.clipboard {
    width: 263px;
}
.clipboard .stack {
    padding-left: 4px;
}
.organize {
    width: 165px;
}
.new {
    width: 83px;
}
.open {
    width: 133px;
}
.select {
    width: 115px;
}
.big {
    display: flex;
    flex-direction: column;
    align-items: center;
    line-height: 13px;
    white-space: nowrap;
}
.big > svg {
    width: 32px;
    height: 32px;
    margin: 2px 0 6px;
}
.pin {
    width: 72px;
    padding-left: 6px;
}
.copy,
.paste {
    width: 42px;
}
.folder {
    width: 50px;
}
.props {
    width: 63px;
}
.big > .drop,
.drop {
    width: 6px;
    height: 4px;
    margin: 4px 0 0;
    color: #b0b0b0;
}
.drop.dark,
.big > .drop.dark {
    color: #222;
}
.stack {
    display: flex;
    flex-direction: column;
}
.small {
    height: 22px;
    display: flex;
    align-items: center;
    gap: 3px;
    white-space: nowrap;
}
.small > svg:first-child {
    width: 16px;
    height: 16px;
}
.small > .drop {
    margin: 0;
}
.big:disabled,
.small:disabled {
    color: #7b7e82;
}
.two {
    gap: 7px;
    padding: 8px 0 0 8px;
}
.second {
    margin-left: 7px;
    padding-left: 7px;
    border-left: 1px solid #e0e2e4;
}
.select .stack {
    padding-left: 7px;
}

/* address row */
.address-row {
    height: 40px;
    padding: 0 12px;
    display: flex;
    align-items: center;
}
.arrow {
    width: 14px;
    height: 14px;
    margin-right: 15px;
}
.arrow.up {
    margin: 0 7px 0 9px;
}
.recent {
    width: 8px;
    height: 8px;
    margin-left: -2px;
    color: #d0d0d0;
}
.address {
    flex: 1;
    height: 30px;
    padding-left: 3px;
    border: 1px solid #d9d9d9;
    display: flex;
    align-items: center;
}
.address .chev {
    margin: 0 8px 0 4px;
    width: 8px;
    height: 8px;
    color: #666;
}
.address .chevd {
    width: 10px;
    height: 10px;
    margin: 0 9px 0 auto;
    color: #777;
}
.refresh {
    width: 30px;
    height: 28px;
    border-left: 1px solid #d9d9d9;
}
.refresh svg {
    width: 12px;
    height: 12px;
    vertical-align: middle;
}
.search-box {
    width: 202px;
    height: 30px;
    margin-left: 12px;
    padding: 0 8px;
    border: 1px solid #d9d9d9;
    display: flex;
    align-items: center;
}
.search-box input {
    flex: 1;
    min-width: 0;
}
.search-box svg {
    width: 12px;
    height: 12px;
}

/* explorer content */
.content {
    flex: 1;
    min-height: 0;
    padding-top: 2px;
    display: flex;
    overflow: hidden;
}
.tree-pane {
    width: 156px;
    display: flex;
}
.tree {
    flex: 1;
    min-width: 0;
    overflow: hidden;
}
.tree li {
    height: 24px;
    padding-left: 14px;
    display: flex;
    align-items: center;
    white-space: nowrap;
}
.tree li.sub {
    padding-left: 22px;
}
.tree .ico {
    margin: 0 5px 0 8px;
}
.tree .hover {
    background: #e5f1fb;
}
.tree .selected {
    background: #d9d9d9;
}
.scrollbar {
    width: 16px;
    margin-left: 1px;
    background: #f0f0f0;
    display: flex;
    flex-direction: column;
    align-items: center;
}
.scrollbar svg {
    width: 10px;
    height: 10px;
    margin: 5px 0 14px;
    color: #505050;
}
.scrollbar svg:last-child {
    margin: auto 0 4px;
}
.thumb {
    width: 100%;
    height: 190px;
    background: #cbcbcb;
}
.files {
    flex: 1;
    padding: 8px 0 0 27px;
    display: grid;
    grid-template-columns: 254px 254px;
    grid-auto-rows: 56px;
}
.files li {
    display: flex;
    gap: 12px;
    padding-top: 7px;
}
.files svg {
    width: 36px;
    height: 42px;
    margin-top: -4px;
}
.statusbar {
    height: 23px;
    padding: 0 8px 0 14px;
    display: flex;
    align-items: center;
    gap: 6px;
    color: #333a50;
}
.view-details {
    width: 16px;
    height: 14px;
    margin-left: auto;
}
.view-large {
    width: 14px;
    height: 12px;
}

/* taskbar preview with the task manager in it */
.preview {
    position: absolute;
    left: 355px;
    bottom: 8px;
    width: 158px;
    height: 164px;
    padding: 11px;
    background: #2a4b68;
    border: 1px solid #1f3c56;
}
.taskmgr {
    height: 140px;
    background: #fafafa;
    font-family: "Liberation Sans", sans-serif;
    font-size: 4px;
    line-height: 6px;
    color: #222;
    white-space: nowrap;
}
.tm-menu {
    padding-left: 2px;
    display: flex;
    gap: 7px;
    color: #888;
}
.tm-tabs {
    height: 9px;
    padding: 2px 0 0 4px;
    background: #f0f0f0;
    display: flex;
    gap: 3px;
}
.tm-tabs .on {
    background: #fff;
}
.tm-page {
    height: 117px;
    padding: 5px 6px 0 9px;
}
.tm-list {
    height: 98px;
    border: 1px solid #ccc;
    background: #fff;
    display: flex;
    overflow: hidden;
}
.tm-list table {
    flex: 1;
    table-layout: fixed;
    border-collapse: collapse;
}
.c-name {
    width: 31px;
}
.c-user {
    width: 21px;
}
.c-cpu {
    width: 9px;
}
.c-mem {
    width: 23px;
}
.tm-list th {
    font-weight: normal;
    text-align: left;
    padding: 0;
}
.tm-list td {
    padding: 0;
}
.tm-list td:nth-child(4) {
    text-align: right;
    padding-right: 4px;
}
.tm-list .on {
    background: #dcdcdc;
}
.tm-scroll {
    width: 5px;
    height: 38px;
    background: #ccc;
}
.tm-actions {
    margin-top: 1px;
    display: flex;
    justify-content: space-between;
}
.tm-actions input {
    width: 4px;
    height: 4px;
    vertical-align: middle;
    margin-right: 1px;
}
.tm-actions button {
    width: 34px;
    height: 7px;
    margin-top: 2px;
    background: #e1e1e1;
}
.tm-status {
    height: 8px;
    padding: 1px 12px 0 1px;
    background: #f0f0f0;
    display: flex;
    justify-content: space-between;
}
.pointer {
    position: absolute;
    left: 231px;
    top: 453px;
    width: 12px;
    height: 20px;
}

/* taskbar */
.taskbar {
    height: 40px;
    background: #203b54;
    color: #fff;
    display: flex;
    align-items: center;
}
.launchers {
    width: 304px;
    padding-left: 3px;
    display: flex;
}
.launchers button {
    width: 42px;
    height: 40px;
    display: flex;
    align-items: center;
    justify-content: center;
}
.launchers .start {
    margin-right: 4px;
}
.launchers svg {
    width: 24px;
    height: 24px;
}
.tasks {
    flex: 1;
    display: flex;
    gap: 3px;
}
.task {
    width: 85px;
    height: 38px;
    padding-left: 8px;
    background: #4b5c70;
    border: 1px solid #7b8896;
    display: flex;
    align-items: center;
    gap: 4px;
    white-space: nowrap;
}
.task svg {
    width: 24px;
    height: 24px;
}
.task.stacked {
    width: 84px;
    border-right: 4px double #7b8896;
}
.task.copying {
    border-color: #d5e8d4;
    background: linear-gradient(90deg, #6fb97c, #66d665 70%, #7b8b9d 70%);
}
.seven {
    width: 24px;
    height: 22px;
    background: #fff;
    border: 2px solid #000;
    outline: 1px solid #fff;
    color: #000;
    font-size: 16px;
    line-height: 18px;
    text-align: center;
}
.tray {
    display: flex;
    align-items: center;
    gap: 8px;
    padding-right: 17px;
}
.tray svg {
    width: 16px;
    height: 16px;
}
.clock {
    width: 52px;
    margin-left: 2px;
    text-align: center;
    line-height: 18px;
}
```
